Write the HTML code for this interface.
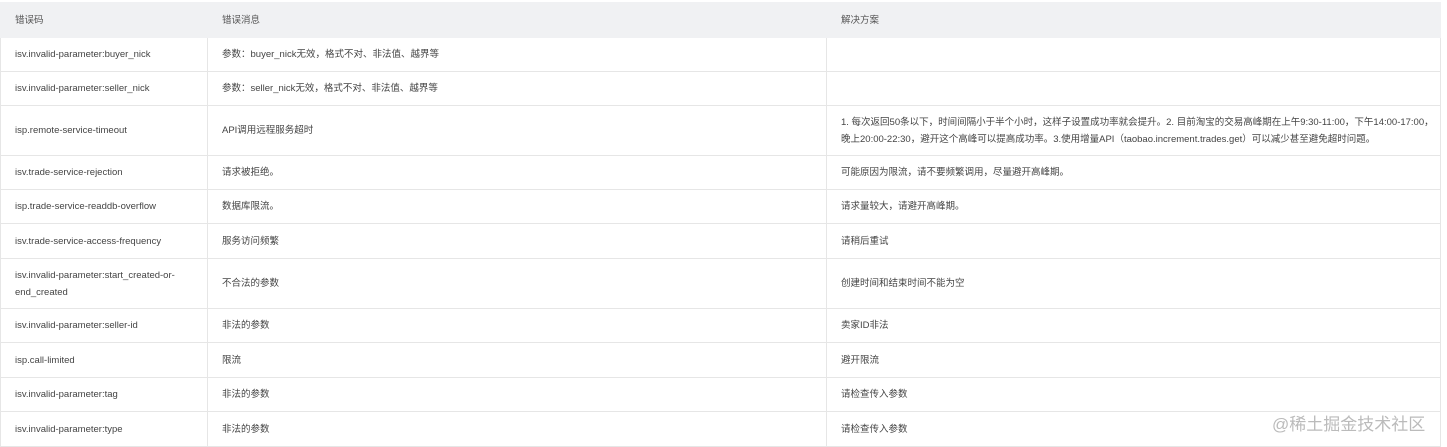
<!DOCTYPE html>
<html><head><meta charset="utf-8"><style>
body{margin:0;background:#fff;width:1447px;height:447px;overflow:hidden;font-family:"Liberation Sans","Noto Sans CJK SC",sans-serif;font-size:9.5px;color:#444;}
table{position:absolute;left:0;top:2px;width:1441px;border-collapse:collapse;table-layout:fixed;}
td,th{border:1px solid #e6e6e6;padding:0 0 0 14px;text-align:left;font-weight:normal;vertical-align:middle;line-height:17px;}
th{background:#f0f1f3;color:#555;height:34px;border-color:#f0f1f3;}
td{height:33px;}
tr.t td{height:49px;}
tr.b td{height:34px;}
.wm{position:absolute;left:1272px;top:410px;font-size:17px;color:#bbb;font-family:"Liberation Sans","Noto Sans CJK SC",sans-serif;}
</style></head><body>
<table>
<colgroup><col style="width:207px"><col style="width:619px"><col></colgroup>
<tr><th>错误码</th><th>错误消息</th><th>解决方案</th></tr>
<tr><td>isv.invalid-parameter:buyer_nick</td><td>参数：buyer_nick无效，格式不对、非法值、越界等</td><td></td></tr>
<tr><td>isv.invalid-parameter:seller_nick</td><td>参数：seller_nick无效，格式不对、非法值、越界等</td><td></td></tr>
<tr class="t"><td>isp.remote-service-timeout</td><td>API调用远程服务超时</td><td>1. 每次返回50条以下，时间间隔小于半个小时，这样子设置成功率就会提升。2. 目前淘宝的交易高峰期在上午9:30-11:00，下午14:00-17:00，晚上20:00-22:30，避开这个高峰可以提高成功率。3.使用增量API（taobao.increment.trades.get）可以减少甚至避免超时问题。</td></tr>
<tr><td>isv.trade-service-rejection</td><td>请求被拒绝。</td><td>可能原因为限流，请不要频繁调用，尽量避开高峰期。</td></tr>
<tr><td>isp.trade-service-readdb-overflow</td><td>数据库限流。</td><td>请求量较大，请避开高峰期。</td></tr>
<tr class="b"><td>isv.trade-service-access-frequency</td><td>服务访问频繁</td><td>请稍后重试</td></tr>
<tr class="t"><td>isv.invalid-parameter:start_created-or-end_created</td><td>不合法的参数</td><td>创建时间和结束时间不能为空</td></tr>
<tr><td>isv.invalid-parameter:seller-id</td><td>非法的参数</td><td>卖家ID非法</td></tr>
<tr class="b"><td>isp.call-limited</td><td>限流</td><td>避开限流</td></tr>
<tr><td>isv.invalid-parameter:tag</td><td>非法的参数</td><td>请检查传入参数</td></tr>
<tr class="b"><td>isv.invalid-parameter:type</td><td>非法的参数</td><td>请检查传入参数</td></tr>
</table>
<div class="wm">@稀土掘金技术社区</div>
</body></html>
